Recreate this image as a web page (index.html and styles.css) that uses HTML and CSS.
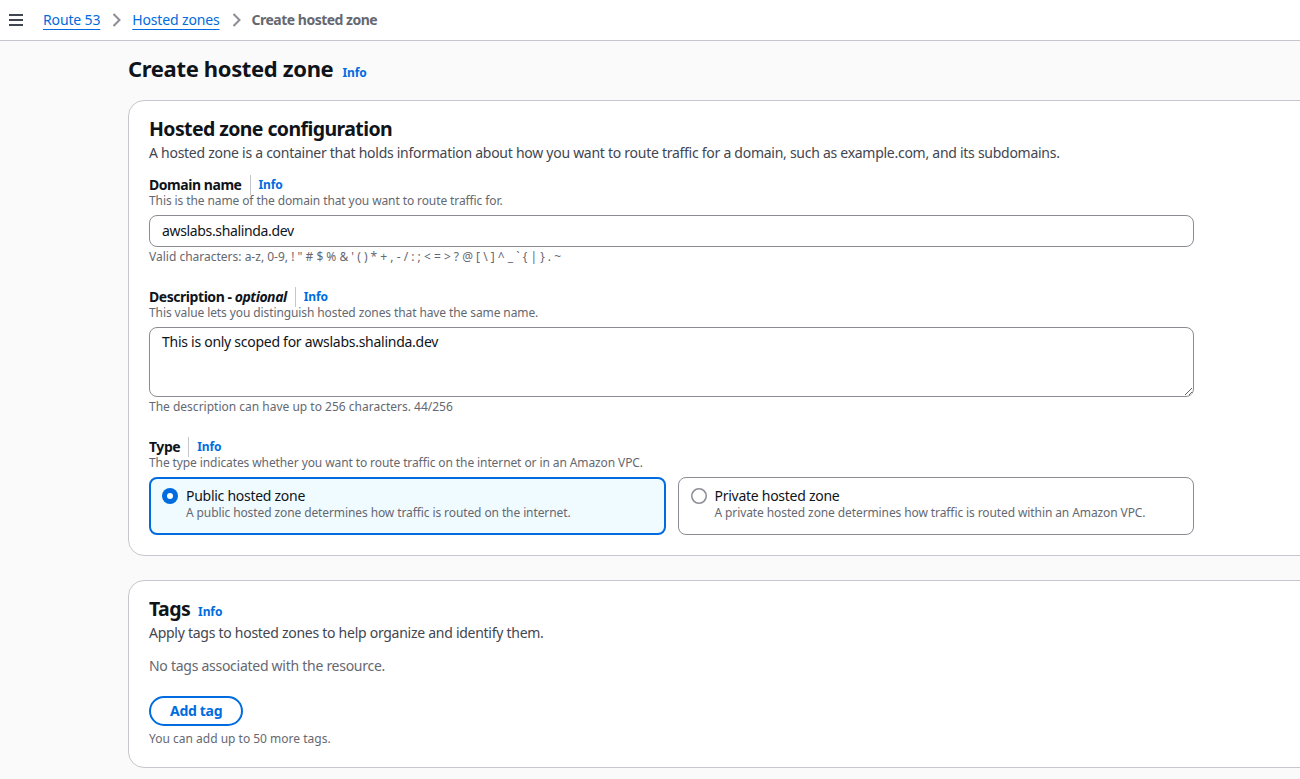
FILE: index.html
```html
<!DOCTYPE html>
<html lang="en">
<head>
<meta charset="utf-8">
<title>Create hosted zone</title>
<link rel="stylesheet" href="styles.css">
</head>
<body>
<header class="topbar">
  <button class="menu-btn" aria-label="Menu">
    <svg width="16" height="16" viewBox="0 0 16 16"><path d="M1 3h14M1 8h14M1 13h14" stroke="#424650" stroke-width="2" fill="none"/></svg>
  </button>
  <nav class="breadcrumbs">
    <a class="crumb" href="#">Route 53</a>
    <svg class="chev" width="16" height="16" viewBox="0 0 16 16"><path d="M5.5 2l6 6-6 6" stroke="#8c8c94" stroke-width="2" fill="none"/></svg>
    <a class="crumb" href="#">Hosted zones</a>
    <svg class="chev" width="16" height="16" viewBox="0 0 16 16"><path d="M5.5 2l6 6-6 6" stroke="#8c8c94" stroke-width="2" fill="none"/></svg>
    <span class="crumb-current">Create hosted zone</span>
  </nav>
</header>

<main class="page">
  <div class="page-header">
    <h1>Create hosted zone</h1>
    <a class="info" href="#">Info</a>
  </div>

  <section class="card">
    <div class="card-header">
      <h2>Hosted zone configuration</h2>
    </div>
    <p class="card-desc">A hosted zone is a container that holds information about how you want to route traffic for a domain, such as example.com, and its subdomains.</p>

    <div class="field first">
      <div class="label-row"><span class="label">Domain name</span><a class="info info-div" href="#">Info</a></div>
      <div class="field-desc">This is the name of the domain that you want to route traffic for.</div>
      <div class="input">awslabs.shalinda.dev</div>
      <div class="constraint">Valid characters: a-z, 0-9, ! " # $ % &amp; ' ( ) * + , - / : ; &lt; = &gt; ? @ [ \ ] ^ _ ` { | } . ~</div>
    </div>

    <div class="field">
      <div class="label-row"><span class="label">Description - <i>optional</i></span><a class="info info-div" href="#">Info</a></div>
      <div class="field-desc">This value lets you distinguish hosted zones that have the same name.</div>
      <textarea class="textarea">This is only scoped for awslabs.shalinda.dev</textarea>
      <div class="constraint">The description can have up to 256 characters. 44/256</div>
    </div>

    <div class="field">
      <div class="label-row"><span class="label">Type</span><a class="info info-div" href="#">Info</a></div>
      <div class="field-desc">The type indicates whether you want to route traffic on the internet or in an Amazon VPC.</div>
      <div class="tiles">
        <div class="tile selected">
          <svg class="radio" width="16" height="16" viewBox="0 0 16 16"><circle cx="8" cy="8" r="8" fill="#006ce0"/><circle cx="8" cy="8" r="3" fill="#fff"/></svg>
          <div class="tile-text">
            <div class="tile-title">Public hosted zone</div>
            <div class="tile-desc">A public hosted zone determines how traffic is routed on the internet.</div>
          </div>
        </div>
        <div class="tile">
          <svg class="radio" width="16" height="16" viewBox="0 0 16 16"><circle cx="8" cy="8" r="7.25" fill="#fff" stroke="#8c8c94" stroke-width="1.5"/></svg>
          <div class="tile-text">
            <div class="tile-title">Private hosted zone</div>
            <div class="tile-desc">A private hosted zone determines how traffic is routed within an Amazon VPC.</div>
          </div>
        </div>
      </div>
    </div>
  </section>

  <section class="card tags-card">
    <div class="card-header">
      <h2>Tags</h2>
      <a class="info" href="#">Info</a>
    </div>
    <p class="card-desc">Apply tags to hosted zones to help organize and identify them.</p>
    <p class="empty">No tags associated with the resource.</p>
    <button class="btn">Add tag</button>
    <div class="constraint hint">You can add up to 50 more tags.</div>
  </section>
</main>
</body>
</html>
```

FILE: styles.css
```css
* { box-sizing: border-box; }
html, body { margin: 0; padding: 0; overflow: hidden; }
body {
  font-family: "Noto Sans", "Open Sans", Arial, sans-serif;
  color: #0f141a;
  background: #fafafa;
  font-size: 14px;
  line-height: 20px;
  letter-spacing: -0.27px;
  width: 1300px;
  height: 779px;
}
a { text-decoration: none; color: #006ce0; }

.topbar {
  height: 41px;
  background: #fff;
  border-bottom: 1px solid #c6c6cd;
  display: flex;
  align-items: center;
  padding-left: 8px;
}
.menu-btn {
  border: 0;
  background: none;
  padding: 0;
  width: 16px;
  height: 16px;
  display: flex;
  margin-right: 19px;
}
.breadcrumbs {
  display: flex;
  align-items: center;
  gap: 8px;
}
.crumb {
  color: #006ce0;
  text-decoration: underline;
  text-underline-offset: 4px;
  text-decoration-thickness: 1px;
  font-size: 14px;
  letter-spacing: -0.15px;
}
.crumb-current {
  color: #656871;
  font-weight: 700;
  font-size: 14px;
  letter-spacing: -0.5px;
}

.page {
  padding-left: 128px;
  padding-top: 12px;
}
.page-header {
  display: flex;
  align-items: baseline;
  gap: 9px;
  height: 47px;
}
h1 {
  margin: 0;
  font-size: 22px;
  line-height: 30px;
  font-weight: 700;
  letter-spacing: -0.35px;
}
.info {
  font-size: 12px;
  font-weight: 700;
  line-height: 16px;
  letter-spacing: -0.1px;
  color: #006ce0;
}

.card {
  width: 1240px;
  background: #fff;
  border: 1px solid #c6c6cd;
  border-radius: 16px;
  padding: 16px 20px 20px;
}
.tags-card { margin-top: 24px; }
.card-header {
  display: flex;
  align-items: baseline;
  gap: 8px;
}
h2 {
  margin: 0;
  font-size: 19.5px;
  line-height: 24px;
  font-weight: 700;
  letter-spacing: -0.6px;
}
.card-desc {
  margin: 2px 0 0;
  color: #424650;
  font-size: 14px;
  line-height: 20px;
}

.field { margin-top: 23px; width: 1045px; }
.field.first { margin-top: 13px; }
.label-row {
  display: flex;
  align-items: center;
  height: 18px;
}
.label { font-weight: 700; font-size: 14px; line-height: 18px; letter-spacing: -0.45px; }
.label i { font-weight: 700; }
.info-div {
  margin-left: 8px;
  padding-left: 8px;
  border-left: 1px solid #c6c6cd;
  line-height: 20px;
}
.field-desc {
  color: #656871;
  font-size: 12px;
  line-height: 14px;
  letter-spacing: -0.1px;
}
.input {
  margin-top: 7px;
  height: 32px;
  border: 1px solid #8c8c94;
  border-radius: 8px;
  padding: 4px 12px;
  line-height: 22px;
  font-size: 14px;
  letter-spacing: -0.35px;
}
.textarea {
  display: block;
  width: 100%;
  margin-top: 7px;
  height: 70px;
  border: 1px solid #8c8c94;
  border-radius: 8px;
  padding: 3px 12px;
  font-family: inherit;
  font-size: 14px;
  line-height: 22px;
  letter-spacing: -0.27px;
  color: #0f141a;
  resize: vertical;
}
.constraint {
  margin-top: 2px;
  color: #656871;
  font-size: 12px;
  line-height: 16px;
  letter-spacing: 0;
}

.tiles {
  margin-top: 7px;
  display: grid;
  grid-template-columns: 1fr 1fr;
  gap: 12px;
}
.tile {
  display: flex;
  gap: 8px;
  height: 58px;
  border: 1px solid #8c8c94;
  border-radius: 8px;
  padding: 8px 12px;
}
.tile.selected {
  border: 2px solid #006ce0;
  background: #f0fbff;
  padding: 7px 11px;
}
.radio { flex: none; margin-top: 2px; }
.tile-title { font-size: 14px; line-height: 20px; }
.tile-desc { color: #656871; font-size: 12px; line-height: 14px; letter-spacing: -0.1px; }

.empty {
  margin: 13px 0 0;
  color: #656871;
  font-size: 14px;
  line-height: 20px;
}
.btn {
  margin-top: 20px;
  display: block;
  border: 2px solid #006ce0;
  border-radius: 20px;
  background: #fff;
  color: #006ce0;
  font-family: inherit;
  font-weight: 700;
  font-size: 14px;
  line-height: 22px;
  letter-spacing: -0.3px;
  padding: 2px 19px;
  height: 30px;
}
.hint { margin-top: 5px; }
```
